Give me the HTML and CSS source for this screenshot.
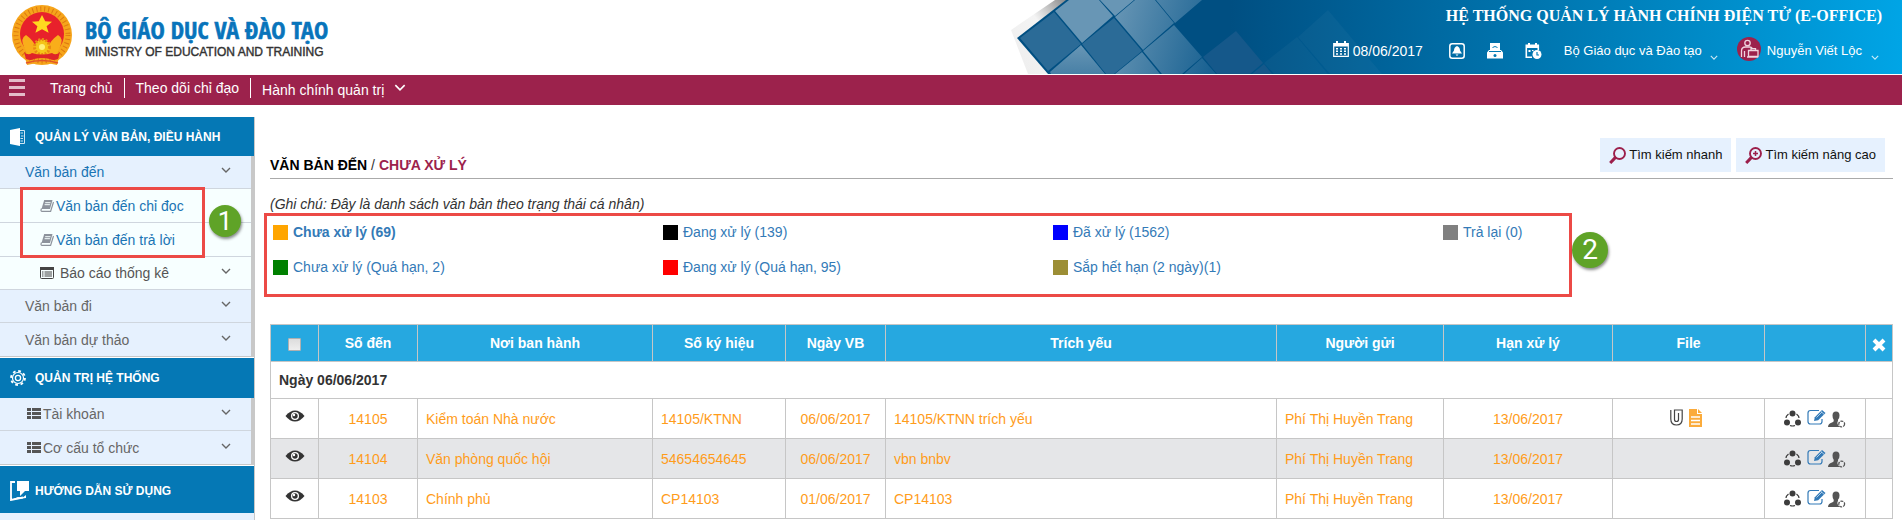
FILE: index.html
```html
<!DOCTYPE html>
<html lang="vi">
<head>
<meta charset="utf-8">
<title>Hệ thống quản lý hành chính điện tử</title>
<link rel="stylesheet" href="styles.css">
</head>
<body>
<svg class="defs" aria-hidden="true">
  <symbol id="chev" viewBox="0 0 10 6"><path d="M1 1l4 4 4-4" fill="none" stroke="currentColor" stroke-width="1.4"/></symbol>
  <symbol id="book" viewBox="0 0 14 12"><path d="M4.200 0H12.500L10 9H1.500z" fill="#8d939c"/><path d="M1.500 8.500Q.2 11.400 2.200 11.400H10.600L13.500 2" fill="none" stroke="#8d939c" stroke-width="1.200"/><path d="M5.200 2.700H10.500M4.600 4.700H9.900" stroke="#f7ffff" stroke-width="1"/></symbol>
  <symbol id="panel" viewBox="0 0 14 12"><rect x=".5" y=".5" width="13" height="11" rx="1" fill="none" stroke="#444"/><path d="M0 0h14v3H0z" fill="#444"/><path d="M2 5h1.500M2 7h1.500M2 9h1.500M4.500 5H12M4.500 7H12M4.500 9H12" stroke="#444"/></symbol>
  <symbol id="list" viewBox="0 0 14 12"><path d="M0 0h4v3H0zM5 0h9v3H5zM0 4h4v3H0zM5 4h9v3H5zM0 8h4v3H0zM5 8h9v3H5z" fill="currentColor"/></symbol>
  <symbol id="eye" viewBox="0 0 20 12"><path d="M.5 6Q5 .5 10 .5T19.500 6Q15 11.500 10 11.500T.5 6z" fill="#333"/><circle cx="10" cy="6" r="4" fill="#fff"/><circle cx="10" cy="6" r="2.700" fill="#333"/><circle cx="9" cy="5" r="1.200" fill="#fff"/></symbol>
  <symbol id="share" viewBox="0 0 17 17"><g fill="#3d3d3d"><circle cx="8.500" cy="3.500" r="3"/><circle cx="3" cy="12.500" r="3"/><circle cx="14" cy="12.500" r="3"/></g><path d="M4.500 4Q2 6 2 8M12.500 4Q15 6 15 8M6 15.500Q8.500 16.500 11 15.500" fill="none" stroke="#3d3d3d" stroke-width="1.200"/></symbol>
  <symbol id="edit" viewBox="0 0 20 18"><path d="M12 1.500H3.500Q1 1.500 1 4v8.500Q1 15 3.500 15h9q2.500 0 2.500-2.500V10" fill="none" stroke="#337ab7" stroke-width="1.200"/><path d="M7 12l.8-3.800L15 1l3.500 3-7.300 7.200z" fill="#337ab7"/><path d="M9.500 8.500l5.500-5.500M13.800 2.300l3.400 3.200" stroke="#cfe2f2" stroke-width=".8"/></symbol>
  <symbol id="person" viewBox="0 0 18 17"><path d="M4.500 4.500Q4.500 .5 8 .5t3.500 4q0 3-1.500 4.300v1.200q-1.500 2 .5 4.500l1 1.500H0q0-3.500 4-4.500 2-.5 1.800-2.500Q4.500 7.500 4.500 4.500z" fill="#555"/><circle cx="13.700" cy="13" r="2.900" fill="none" stroke="#555" stroke-width="1.300" stroke-dasharray="3 1"/></symbol>
  <symbol id="glass" viewBox="0 0 17 17"><circle cx="10.500" cy="6.500" r="5.500" fill="none" stroke="#9c1f4b" stroke-width="1.900"/><path d="M6.500 10.400L1.200 16" stroke="#9c1f4b" stroke-width="3"/></symbol>
</svg>

<header class="top">
  <svg class="banner" viewBox="1011 0 891 74" aria-hidden="true">
    <defs>
      <linearGradient id="sky" gradientUnits="userSpaceOnUse" x1="1230" y1="20" x2="1902" y2="60"><stop offset="0" stop-color="#004f82"/><stop offset=".3" stop-color="#0069a1"/><stop offset=".65" stop-color="#0086c2"/><stop offset="1" stop-color="#00a5e6"/></linearGradient>
      <linearGradient id="paper" x1="0" y1="1" x2="1" y2="0"><stop offset="0" stop-color="#ededed"/><stop offset=".6" stop-color="#f4f4f4"/><stop offset="1" stop-color="#888"/></linearGradient>
      <linearGradient id="tile" gradientUnits="userSpaceOnUse" x1="1110" y1="20" x2="1215" y2="50"><stop offset="0" stop-color="#6896b5"/><stop offset="1" stop-color="#1a6292"/></linearGradient>
      <linearGradient id="low" x1="0" y1="0" x2="0" y2="1"><stop offset="0" stop-color="#6896b5"/><stop offset="1" stop-color="#4880a6"/></linearGradient>
    </defs>
    <path d="M1011 30L1055 0h12L1018 38l30 36h-20z" fill="url(#paper)"/>
    <path d="M1017 38L1066 0h836v74H1048z" fill="url(#sky)"/>
    <path d="M1020 38l34-26 27 32-33 27zM1082 44l32-26 28 33-28 23h-8z" fill="#2b6b97"/>
    <path d="M1055 11L1069 0h30l14 16-31 27zM1100 0h34l-19 16z" fill="#6896b5"/>
    <path d="M1050 72l31-27 24 29h-54z" fill="url(#low)"/>
    <path d="M1135 0h20l19 23-31 27-28-33zM1156 0h46l-27 23zM1142 52l18 22h-45zM1174 25l28 32-20 17h-20l-19-23zM1202 58l14 16h-32z" fill="url(#tile)"/>
    <path d="M1236 31l27 32-13 11h-33l-14-17zM1264 64l8 10h-20z" fill="#15588a"/>
    <path d="M1328 10l54 64h-52l-32-37zM1297 37l31 37h-54l-10-11z" fill="#fff" opacity=".03"/>
  </svg>
  <a class="brand" href="#">
    <svg class="emblem" viewBox="0 0 62 62" aria-hidden="true">
      <path d="M12 45l4 15q15-4 30 0l4-15z" fill="#f5a21d"/>
      <circle cx="31" cy="30" r="30" fill="#f6a51b"/>
      <circle cx="31" cy="30" r="26" fill="none" stroke="#dd7a10" stroke-width="5" stroke-dasharray="1 3"/>
      <circle cx="31" cy="29" r="22" fill="#e8212b"/>
      <path d="M31 10l3.200 6.200 6.800.6-5.400 4.500 2 6.500-6.600-3.500-6.600 3.500 2-6.500-5.400-4.500 6.800-.6z" fill="#ffd91f"/>
      <path d="M13 42q-4-9 2-12 7 5 10 12h12q3-7 10-12 6 3 2 12l-4 8H17z" fill="#f9ae1a"/>
      <circle cx="31" cy="42" r="7.500" fill="#f5c518" stroke="#e98a12" stroke-width="3" stroke-dasharray="2 1.500"/>
      <circle cx="31" cy="42" r="3" fill="#fff07a"/>
      <path d="M13 47q4 4 8 1 10 3 20 0 4 3 8-1l-2 7q-5 2-8 0-8-2-16 0-3 2-8 0z" fill="#df2428"/>
      <path d="M15 58q16-5 32 0" stroke="#e2542a" stroke-width="1.500" fill="none"/>
    </svg>
    <span class="brand-text"><strong>BỘ GIÁO DỤC VÀ ĐÀO TẠO</strong><span>MINISTRY OF EDUCATION AND TRAINING</span></span>
  </a>
  <div class="tools">
    <h1>HỆ THỐNG QUẢN LÝ HÀNH CHÍNH ĐIỆN TỬ (E-OFFICE)</h1>
    <div class="tool-row">
      <span class="today"><svg width="16" height="16" viewBox="0 0 16 16"><path d="M.7 2.700h14.600v12.600H.7z" fill="none" stroke="#fff" stroke-width="1.200"/><path d="M1 3h14v2.500H1zM3 0h2v3H3zM11 0h2v3h-2z" fill="#fff"/><path d="M3 7.700h10M3 10.300h10M3 12.900h10" stroke="#fff" stroke-width="1.500" stroke-dasharray="2 2"/></svg>08/06/2017</span>
      <button class="tool" aria-label="Thông báo"><svg width="16" height="16" viewBox="0 0 16 16"><rect x=".8" y=".8" width="14.400" height="14.400" rx="2.500" fill="none" stroke="#fff" stroke-width="1.500"/><path d="M8 3q3 1 3 4.500L13 10.500H3L5 7.500Q5 4 8 3zM6.500 11.500h3L8 13z" fill="#fff"/></svg></button>
      <button class="tool" aria-label="Lưu trữ"><svg width="16" height="16" viewBox="0 0 16 16"><path d="M3 0h10v7H3zM2 7h12l2 2.500v6H0v-6z" fill="#fff"/><path d="M5.500 4.500q2.500-2 5 0M2 8.500h12" stroke="#0079b4" fill="none"/><circle cx="8" cy="12.500" r="1.500" fill="#0079b4"/></svg></button>
      <button class="tool" aria-label="Lịch"><svg width="17" height="16" viewBox="0 0 17 16"><path d="M7 14.300H1.300V2.300h12V7" fill="none" stroke="#fff" stroke-width="1.600"/><path d="M1 2h13v3H1zM3 0h2v3H3zM10 0h2v3h-2zM3.500 7h2v2h-2zM7 7h1.500v1H7z" fill="#fff"/><circle cx="12" cy="11.500" r="4.500" fill="#fff"/><path d="M12 9v3h2" fill="none" stroke="#007fbb" stroke-width="1.200"/></svg></button>
      <button class="pick">Bộ Giáo dục và Đào tạo <svg class="tiny"><use href="#chev"/></svg></button>
      <button class="pick user"><svg class="avatar" width="24" height="24" viewBox="0 0 24 24"><circle cx="12" cy="12" r="12" fill="#9c224c"/><g fill="none" stroke="#f0d4de" stroke-width="1.300"><circle cx="10.500" cy="6" r="2.700"/><path d="M4.500 20v-6q0-4 4-4h4q2 0 3 1.500M7.500 20v-6M11.500 13.500h9.500v6h-9.500zM14 13.500v-1.800h4.500v1.800M10 20h11"/></g></svg>Nguyễn Viết Lộc <svg class="tiny"><use href="#chev"/></svg></button>
    </div>
  </div>
</header>

<nav class="nav">
  <button class="burger" aria-label="Menu"><i></i><i></i><i></i></button>
  <a href="#">Trang chủ</a>
  <a href="#">Theo dõi chỉ đạo</a>
  <a href="#" class="drop">Hành chính quản trị <svg class="nav-chev"><use href="#chev"/></svg></a>
</nav>

<div class="body">
  <aside class="side">
    <h2 class="first"><svg width="16" height="18" viewBox="0 0 16 18"><path d="M0 2L10 0v18L0 16z" fill="#fff"/><path d="M10 2.500h4.500v13H10M10.500 5H13M11 8h2.500M10.500 10.500H13M10.500 13H13" fill="none" stroke="#cfe6f4" stroke-width="1"/></svg>QUẢN LÝ VĂN BẢN, ĐIỀU HÀNH</h2>
    <ul>
      <li><a class="on" href="#">Văn bản đến<svg class="chev"><use href="#chev"/></svg></a></li>
      <li class="pair">
        <a class="sub on" href="#"><svg class="ico"><use href="#book"/></svg>Văn bản đến chỉ đọc</a>
        <a class="sub on" href="#"><svg class="ico"><use href="#book"/></svg>Văn bản đến trả lời</a>
        <span class="mark mark-one"></span><span class="badge badge-one">1</span>
      </li>
      <li><a class="sub report" href="#"><svg class="ico"><use href="#panel"/></svg>Báo cáo thống kê<svg class="chev"><use href="#chev"/></svg></a></li>
      <li><a href="#">Văn bản đi<svg class="chev"><use href="#chev"/></svg></a></li>
      <li><a href="#">Văn bản dự thảo<svg class="chev"><use href="#chev"/></svg></a></li>
    </ul>
    <h2><svg width="16" height="16" viewBox="0 0 16 16"><g fill="none" stroke="#fff"><circle cx="8" cy="8" r="7" stroke-width="1.800" stroke-dasharray="2.750 2.750"/><circle cx="8" cy="8" r="5.500" stroke-width="1.200"/><circle cx="8" cy="8" r="2.600" stroke-width="1.300"/></g></svg>QUẢN TRỊ HỆ THỐNG</h2>
    <ul>
      <li><a href="#"><svg class="ico list"><use href="#list"/></svg>Tài khoản<svg class="chev"><use href="#chev"/></svg></a></li>
      <li><a href="#"><svg class="ico list"><use href="#list"/></svg>Cơ cấu tổ chức<svg class="chev"><use href="#chev"/></svg></a></li>
    </ul>
    <h2 class="help"><svg width="19" height="20" viewBox="0 0 19 20"><path d="M5 1H1v18l12-2.500" fill="none" stroke="#fff" stroke-width="1.800"/><path d="M7 0h12v10h-4l-5 5v-5H7zM1 19l7-3 4 1 4-3v3z" fill="#fff"/></svg>HƯỚNG DẪN SỬ DỤNG</h2>
  </aside>

  <main class="main">
    <div class="head">
      <h2><b>VĂN BẢN ĐẾN</b> / <b class="here">CHƯA XỬ LÝ</b></h2>
      <div class="actions">
        <button><svg width="17" height="17"><use href="#glass"/></svg>Tìm kiếm nhanh</button>
        <button><svg width="17" height="17" viewBox="0 0 17 17"><use href="#glass" width="17" height="17"/><path d="M10.500 4v5M8 6.500h5" stroke="#9c1f4b" stroke-width="1.500"/></svg>Tìm kiếm nâng cao</button>
      </div>
    </div>
    <p class="note">(Ghi chú: Đây là danh sách văn bản theo trạng thái cá nhân)</p>
    <div class="legend">
      <a class="orange" href="#"><b>Chưa xử lý (69)</b></a>
      <a class="black" href="#">Đang xử lý (139)</a>
      <a class="blue" href="#">Đã xử lý (1562)</a>
      <a class="gray" href="#">Trả lại (0)</a>
      <a class="green" href="#">Chưa xử lý (Quá hạn, 2)</a>
      <a class="red" href="#">Đang xử lý (Quá hạn, 95)</a>
      <a class="olive" href="#">Sắp hết hạn (2 ngày)(1)</a>
      <span class="mark mark-two"></span><span class="badge badge-two">2</span>
    </div>
    <table class="docs">
      <colgroup><col class="c1"><col class="c2"><col class="c3"><col class="c4"><col class="c5"><col><col class="c7"><col class="c8"><col class="c9"><col class="c10"><col class="c11"></colgroup>
      <thead><tr><th><input type="checkbox" aria-label="Chọn tất cả"></th><th>Số đến</th><th>Nơi ban hành</th><th>Số ký hiệu</th><th>Ngày VB</th><th>Trích yếu</th><th>Người gửi</th><th>Hạn xử lý</th><th>File</th><th></th><th class="close"><svg width="14" height="14" viewBox="0 0 14 14"><path d="M2 2l10 10M12 2L2 12" stroke="#fff" stroke-width="4"/></svg></th></tr></thead>
      <tbody>
        <tr class="group"><td colspan="11">Ngày 06/06/2017</td></tr>
        <tr><td class="mid"><svg class="eye"><use href="#eye"/></svg></td><td class="mid">14105</td><td>Kiểm toán Nhà nước</td><td>14105/KTNN</td><td class="mid">06/06/2017</td><td>14105/KTNN trích yếu</td><td>Phí Thị Huyền Trang</td><td class="mid">13/06/2017</td>
          <td><div class="files"><svg width="13" height="17" viewBox="0 0 13 17"><path d="M.8 1v9q0 6 5.700 6t5.700-6V1H4.500v9.500q0 2 2 2t2-2V4" fill="none" stroke="#444" stroke-width="1.200"/></svg><svg width="13" height="18" viewBox="0 0 13 18"><path d="M0 0h8v5h5v13H0zM9 0l4 4H9z" fill="#fbab3b"/><path d="M2 8h9M2 11.500h9M2 15h9" stroke="#fff" stroke-width="1.400"/></svg></div></td>
          <td><div class="acts"><svg class="share"><use href="#share"/></svg><svg class="edit"><use href="#edit"/></svg><svg class="person"><use href="#person"/></svg></div></td><td></td></tr>
        <tr class="alt"><td class="mid"><svg class="eye"><use href="#eye"/></svg></td><td class="mid">14104</td><td>Văn phòng quốc hội</td><td>54654654645</td><td class="mid">06/06/2017</td><td>vbn bnbv</td><td>Phí Thị Huyền Trang</td><td class="mid">13/06/2017</td><td></td>
          <td><div class="acts"><svg class="share"><use href="#share"/></svg><svg class="edit"><use href="#edit"/></svg><svg class="person"><use href="#person"/></svg></div></td><td></td></tr>
        <tr><td class="mid"><svg class="eye"><use href="#eye"/></svg></td><td class="mid">14103</td><td>Chính phủ</td><td>CP14103</td><td class="mid">01/06/2017</td><td>CP14103</td><td>Phí Thị Huyền Trang</td><td class="mid">13/06/2017</td><td></td>
          <td><div class="acts"><svg class="share"><use href="#share"/></svg><svg class="edit"><use href="#edit"/></svg><svg class="person"><use href="#person"/></svg></div></td><td></td></tr>
      </tbody>
    </table>
  </main>
</div>
</body>
</html>
```
FILE: styles.css
```css
* { box-sizing: border-box; }
body { margin: 0; min-height: 100vh; display: flex; flex-direction: column; background: #fff; color: #333; font: 14px/20px "Liberation Sans", Arial, sans-serif; }
a { color: inherit; text-decoration: none; }
button { border: 0; padding: 0; background: none; color: inherit; font: inherit; cursor: pointer; }
h1, h2, p, ul { margin: 0; padding: 0; list-style: none; }
svg { display: block; flex: none; }
.defs { position: absolute; width: 0; height: 0; }

.top { position: relative; flex: none; display: flex; justify-content: space-between; height: 74px; margin-bottom: 1px; }
.banner { position: absolute; top: 0; right: 0; width: 891px; height: 74px; }
.brand { display: flex; align-items: flex-start; gap: 12px; padding: 5px 0 0 11px; }
.emblem { width: 62px; height: 62px; }
.brand-text { display: flex; flex-direction: column; padding-top: 13px; color: #333; }
.brand-text strong { color: #0874bb; font: bold 24px/24px "Liberation Sans Narrow", "Open Sans Condensed", "DejaVu Sans Condensed", sans-serif; white-space: nowrap; -webkit-text-stroke: 0.6px #0874bb; }
.brand-text span { font: 12px/20px "Liberation Sans", sans-serif; white-space: nowrap; -webkit-text-stroke: 0.4px #333; }
.tools { position: relative; display: flex; flex-direction: column; align-items: flex-end; padding: 6px 20px 0 0; color: #fff; }
.tools h1 { font: bold 16px/20px "Liberation Serif", "Times New Roman", serif; }
.tool-row { display: flex; align-items: center; height: 24px; margin-top: 13px; font-size: 13px; }
.today { display: flex; gap: 4px; margin-right: 26px; font-size: 14px; }
.tool { margin-right: 22px; }
.pick { display: flex; align-items: center; gap: 8px; }
.pick.user { gap: 6px; margin: 0 3px 0 19px; }
.avatar { margin-bottom: 4px; }
.tiny { width: 8px; height: 5px; margin-top: 12px; opacity: .8; }
.user .tiny { margin-left: 3px; }

.nav { flex: none; display: flex; align-items: flex-start; height: 30px; padding: 3px 9px; background: #9c224c; color: #fff; }
.burger { display: flex; flex-direction: column; gap: 4px; margin: 1px 14px 0 0; }
.burger i { width: 16px; height: 3px; background: #e3bcc9; }
.nav a { padding: 0 11px; border-left: 1px solid #fff; }
.nav .burger + a { border-left: 0; }
.nav .drop { display: flex; align-items: center; height: 20px; padding-top: 4px; }
.nav-chev { width: 12px; height: 7px; margin: -6px 0 0 10px; }

.body { flex: 1; display: flex; align-items: stretch; padding-top: 12px; }
.side { flex: none; width: 255px; border-right: 1px solid #c8c8c8; background: #e6f1fe; }
.side h2 { display: flex; align-items: center; gap: 9px; height: 41px; padding: 0 10px; border-top: 1px solid #fff; background: #0578b5; color: #fff; font-size: 12px; line-height: 16px; font-weight: bold; white-space: nowrap; }
.side h2.first { height: 39px; border-top: 0; }
.side h2.help { height: 48px; gap: 6px; padding-top: 3px; }
.side ul { border-right: 3px solid #c8c8c8; border-bottom: 1px solid #c8c8c8; color: #666; }
.side li a { display: flex; align-items: center; height: 33px; padding: 0 20px 0 25px; border-bottom: 1px solid #cfd6de; }
.side li:last-child a { border-bottom: 0; }
.side .on { color: #1a74b4; }
.side .sub { padding-left: 40px; background: #f7ffff; }
.side .sub.report { color: #555; }
.side .report .ico { margin-right: 6px; }
.side .chev { width: 10px; height: 6px; margin: -4px 0 0 auto; color: #666; }
.ico { width: 14px; height: 12px; margin-right: 2px; }
.ico.list { margin-left: 2px; color: #555; }
.pair { position: relative; }
.pair .sub { height: 34px; }
.mark { position: absolute; border: 3px solid #ec4a46; pointer-events: none; }
.badge { position: absolute; display: flex; align-items: center; justify-content: center; border-radius: 50%; background: #5fa327; box-shadow: 1px 2px 3px rgba(0, 0, 0, .45); color: #fff; font: 26px/26px Roboto, sans-serif; }
.mark-one { inset: -2px 46px -1px 20px; }
.badge-one { left: 209px; top: 16px; width: 32px; height: 32px; }

.main { flex: 1; min-width: 0; padding: 21px 9px 0 15px; }
.head { display: flex; align-items: flex-end; justify-content: space-between; border-bottom: 1px solid #aaa; height: 41px; }
.head h2 { padding-bottom: 2px; font-weight: normal; font-size: 14px; line-height: 22px; color: #333; }
.head b { color: #000; }
.head .here { color: #9c224c; }
.actions { display: flex; gap: 5px; padding: 0 8px 6px 0; }
.actions button { display: flex; align-items: center; gap: 3px; height: 34px; padding: 0 9px; background: #e6f1fe; color: #111; font-size: 13px; }
.note { padding-top: 15px; font-style: italic; }
.legend { position: relative; display: grid; grid-template-columns: repeat(4, minmax(0, 390px)); row-gap: 15px; padding: 8px 0 0 3px; color: #337ab7; }
.legend a { display: flex; align-items: center; gap: 5px; }
.legend a::before { content: ""; width: 15px; height: 15px; background: var(--dot); }
.orange { --dot: #ffa500; }
.black { --dot: #000; }
.blue { --dot: #00f; }
.gray { --dot: #808080; }
.green { --dot: #008000; }
.red { --dot: #f00; }
.olive { --dot: #9c8e35; }
.mark-two { top: -1px; left: -6px; width: 1308px; height: 84px; }
.badge-two { top: 18px; left: 1302px; width: 36px; height: 36px; font-size: 28px; }

.docs { width: 100%; margin-top: 47px; border-collapse: collapse; table-layout: fixed; color: #ff9c1a; }
.docs th, .docs td { border: 1px solid #c6c6c6; padding: 0 8px; text-align: left; white-space: nowrap; }
.docs th { height: 37px; padding: 0; background: #26a8e0; color: #fff; text-align: center; }
.docs td { height: 40px; }
.docs .mid { padding: 0; text-align: center; }
.docs .alt { background: #e5e6e8; }
.docs .group td { height: 37px; color: #333; font-weight: bold; }
.docs input { appearance: none; width: 13px; height: 13px; margin: 0; border: 1px solid #b0b0b0; border-radius: 1px; background: linear-gradient(#ddd, #eee); vertical-align: middle; }
.docs .close svg { margin: 3px auto 0; }
.eye { width: 20px; height: 12px; margin: -6px auto 0; }
.files { display: flex; justify-content: center; gap: 6px; padding: 0 5px 2px 0; }
.acts { display: flex; align-items: center; justify-content: center; gap: 1px; }
.share { width: 17px; height: 17px; margin-right: 5px; }
.edit { width: 20px; height: 18px; margin-top: -2px; }
.person { width: 18px; height: 17px; margin-top: 2px; }
.c1 { width: 48px; }
.c2 { width: 99px; }
.c3 { width: 235px; }
.c4 { width: 133px; }
.c5 { width: 100px; }
.c7 { width: 167px; }
.c8 { width: 169px; }
.c9 { width: 152px; }
.c10 { width: 101px; }
.c11 { width: 27px; }
```
